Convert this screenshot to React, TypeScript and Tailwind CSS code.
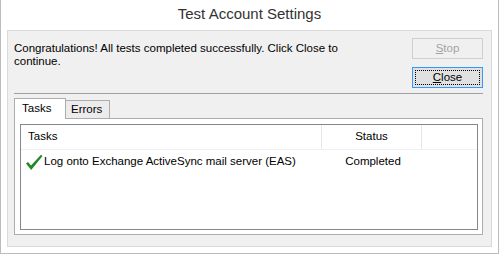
const FONT = "font-['Segoe_UI','Liberation_Sans',sans-serif]";

const CheckIcon = () => (
  <svg width="18" height="17" viewBox="0 0 18 17" className="shrink-0">
    <path d="M1 9.5 L3 8 L6 11.5 L16 0.8 L17.5 2 L6.2 16 Z" fill="#1f8a24" />
  </svg>
);

export default function App() {
  return (
    <div className={`${FONT} w-[499px] h-[254px] bg-white border-x border-b border-[#bcbcbc] flex flex-col text-[11.5px] text-black`}>
      {/* title bar */}
      <div className="h-[30px] flex items-center justify-center text-[15px] text-[#333] pb-[1px]">
        Test Account Settings
      </div>

      <div className="mx-[6px] h-[217px] border border-[#d9d9d9] bg-[#f0f0f0] pl-[6px] pr-[8px] pt-[7px] flex flex-col">
        {/* message + buttons */}
        <div className="flex justify-between">
          <p className="mt-[4px] leading-[13px]">
            Congratulations! All tests completed successfully. Click Close to
            <br />
            continue.
          </p>
          <div className="flex flex-col gap-[8px] w-[71px]">
            <button
              disabled
              className="h-[21px] border border-[#cfcfcf] bg-[#f0f0f0] text-[#a3a3a3] flex items-center justify-center"
            >
              <span>
                <span className="underline">S</span>top
              </span>
            </button>
            <button className="h-[21px] border border-[#3399ff] bg-[#e1e1e1] p-[2px] flex">
              <span className="flex-1 border border-dotted border-black flex items-center justify-center">
                <span>
                  <span className="underline">C</span>lose
                </span>
              </span>
            </button>
          </div>
        </div>

        <div className="mt-[5px] h-px bg-[#a0a0a0]" />

        {/* tabs */}
        <div className="mt-[4px] h-[20px] flex items-end">
          <div className="relative z-10 -mb-px h-[21px] w-[52px] border-x border-t border-[#adadad] bg-white flex items-center pl-[7px] pb-[1px]">
            Tasks
          </div>
          <div className="h-[18px] w-[44px] border-r border-t border-[#adadad] bg-[#ececec] flex items-center pl-[5px] pt-[1px]">
            Errors
          </div>
        </div>

        <div className="h-[117px] border border-[#adadad] bg-white pl-[5px] pr-[4px] pt-[5px] pb-[4px] flex">
          <div className="flex-1 border border-[#828790] flex flex-col">
            <div className="h-[25px] flex border-b border-[#eef0f3]">
              <div className="w-[301px] border-r border-[#e3e8ee] flex items-center pl-[7px]">Tasks</div>
              <div className="w-[100px] border-r border-[#e3e8ee] flex items-center justify-center">Status</div>
              <div className="flex-1" />
            </div>
            <div className="h-[22px] pt-[2px] flex items-center">
              <div className="w-[302px] flex items-center pl-[4px] gap-[1px]">
                <CheckIcon />
                <span>Log onto Exchange ActiveSync mail server (EAS)</span>
              </div>
              <div className="w-[100px] text-center">Completed</div>
            </div>
          </div>
        </div>
      </div>
    </div>
  );
}
